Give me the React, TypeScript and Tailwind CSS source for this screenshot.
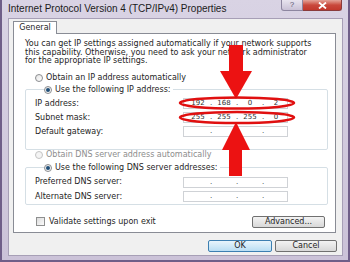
import React from "react";

function Radio({ checked = false, disabled = false }: { checked?: boolean; disabled?: boolean }) {
  return (
    <span
      className={`flex items-center justify-center w-[8px] h-[8px] rounded-full border ${
        disabled ? "border-[#c4c4c4] bg-[#f4f4f4]" : "border-[#8b8d90] bg-gradient-to-br from-[#e4e4e4] to-[#ffffff]"
      }`}
    >
      {checked && <span className="w-[4px] h-[4px] rounded-full bg-[#1f4e78]" />}
    </span>
  );
}

function IpBox({ parts = ["", "", "", ""] }: { parts?: string[] }) {
  return (
    <div className="flex items-center w-[105px] h-[11px] border border-[#cfd2d6] bg-white pl-[3px] text-[7px] text-[#333]">
      {parts.map((p, i) => (
        <React.Fragment key={i}>
          {i > 0 && <span className="w-[4px] text-center">.</span>}
          <span className="w-[22px] text-center">{p}</span>
        </React.Fragment>
      ))}
    </div>
  );
}

function FieldRow({ label, parts, h = "h-[14px]" }: { label: string; parts?: string[]; h?: string }) {
  return (
    <div className={`flex items-center ${h}`}>
      <span className="w-[148px]">{label}</span>
      <IpBox parts={parts} />
    </div>
  );
}

export default function App() {
  return (
    <div className="relative w-[350px] h-[262px] overflow-hidden flex flex-col bg-gradient-to-b from-[#d9d3e4] to-[#cbc2d8] border-x-2 border-b-2 border-[#6f5e88] font-['DejaVu_Sans',sans-serif] text-[8px] leading-none text-[#1e1e1e]">
      {/* title bar */}
      <div className="flex items-start h-[18px] pl-[6px] pr-[6px] shrink-0">
        <span className="mt-[4px] font-['Liberation_Sans',sans-serif] text-[10px] text-[#1b1b1b]">
          Internet Protocol Version 4 (TCP/IPv4) Properties
        </span>
        <div className="ml-auto flex">
          <div className="w-[22px] h-[11px] flex items-center justify-center rounded-bl-[3px] border border-t-0 border-[#8d86a0] bg-gradient-to-b from-[#e8e4ef] to-[#c9c1d6] font-['Liberation_Sans',sans-serif] text-[8px] text-[#5a5470]">
            ?
          </div>
          <div className="w-[39px] h-[11px] flex items-center justify-center rounded-br-[3px] border border-t-0 border-l-0 border-[#8a3b3b] bg-gradient-to-b from-[#e3a399] via-[#c9483c] to-[#c2382c]">
            <svg width="9" height="7" viewBox="0 0 9 7">
              <path d="M1 0.5 L8 6.5 M8 0.5 L1 6.5" stroke="#ffffff" strokeWidth="1.8" />
            </svg>
          </div>
        </div>
      </div>

      {/* client area */}
      <div className="flex flex-col ml-[6px] mr-[5px] h-[238px] border border-[#a79fb6] bg-[#f0f0f0] pl-[4px] pt-[2px]">
        <div className="relative z-10 -mb-px flex items-center justify-center w-[44px] h-[13px] border border-b-0 border-[#898c95] bg-white">
          General
        </div>
        <div className="flex flex-col w-[323px] h-[200px] border border-[#898c95] bg-white">
          <p className="pl-[11px] pt-[6px] leading-[8.5px]">
            You can get IP settings assigned automatically if your network supports
            <br />
            this capability. Otherwise, you need to ask your network administrator
            <br />
            for the appropriate IP settings.
          </p>

          <div className="flex items-center gap-[3px] h-[10px] mt-[7px] pl-[21px]">
            <Radio />
            <span>Obtain an IP address automatically</span>
          </div>

          <fieldset className="ml-[11px] mt-[2px] w-[303px] border border-[#d5dfe5] rounded-[2px] pl-[9px] pt-[2px] pb-[10px]">
            <legend className="ml-[9px] flex items-center gap-[3px] h-[10px] bg-white pr-[2px]">
              <Radio checked />
              <span>Use the following IP address:</span>
            </legend>
            <FieldRow label="IP address:" parts={["192", "168", "0", "2"]} />
            <FieldRow label="Subnet mask:" parts={["255", "255", "255", "0"]} />
            <FieldRow label="Default gateway:" />
          </fieldset>

          <div className="flex items-center gap-[3px] h-[10px] pl-[21px] text-[#8d8d8d]">
            <Radio disabled />
            <span>Obtain DNS server address automatically</span>
          </div>

          <fieldset className="ml-[11px] mt-[3px] w-[303px] border border-[#d5dfe5] rounded-[2px] pl-[9px] pt-[2px]">
            <legend className="ml-[9px] flex items-center gap-[3px] h-[10px] bg-white pr-[2px]">
              <Radio checked />
              <span>Use the following DNS server addresses:</span>
            </legend>
            <FieldRow label="Preferred DNS server:" h="h-[15px]" />
            <FieldRow label="Alternate DNS server:" h="h-[14px]" />
          </fieldset>

          <div className="flex items-center mt-[11px] pl-[22px] pr-[10px]">
            <span className="w-[9px] h-[9px] border border-[#8e8f8f] bg-gradient-to-br from-[#dcdcdc] to-[#fbfbfb]" />
            <span className="ml-[4px]">Validate settings upon exit</span>
            <div className="ml-auto flex items-center justify-center w-[73px] h-[12px] rounded-[2px] border border-[#707070] bg-gradient-to-b from-[#f3f3f3] to-[#d8d8d8]">
              Advanced...
            </div>
          </div>
        </div>

        <div className="flex justify-end gap-[3px] mt-[7px] pr-[5px]">
          <div className="flex items-center justify-center w-[64px] h-[12px] rounded-[2px] border border-[#3c7fb1] bg-gradient-to-b from-[#e8f5fc] to-[#b9def3]">
            OK
          </div>
          <div className="flex items-center justify-center w-[62px] h-[12px] rounded-[2px] border border-[#707070] bg-gradient-to-b from-[#f3f3f3] to-[#d8d8d8]">
            Cancel
          </div>
        </div>
      </div>

      {/* red annotations */}
      <svg className="absolute left-[-2px] top-0 pointer-events-none" width="350" height="262" viewBox="0 0 350 262">
        <rect x="229" y="45" width="14" height="27" fill="#ec1212" />
        <polygon points="220,71 252,71 236,99" fill="#ec1212" />
        <polygon points="222,150 250,150 236,122" fill="#ec1212" />
        <rect x="229" y="149" width="13" height="27" fill="#ec1212" />
        <ellipse cx="237" cy="103" rx="57" ry="5.5" fill="none" stroke="#e01010" strokeWidth="2.5" />
        <ellipse cx="237" cy="117.5" rx="57" ry="5.5" fill="none" stroke="#e01010" strokeWidth="2.5" />
      </svg>
    </div>
  );
}
